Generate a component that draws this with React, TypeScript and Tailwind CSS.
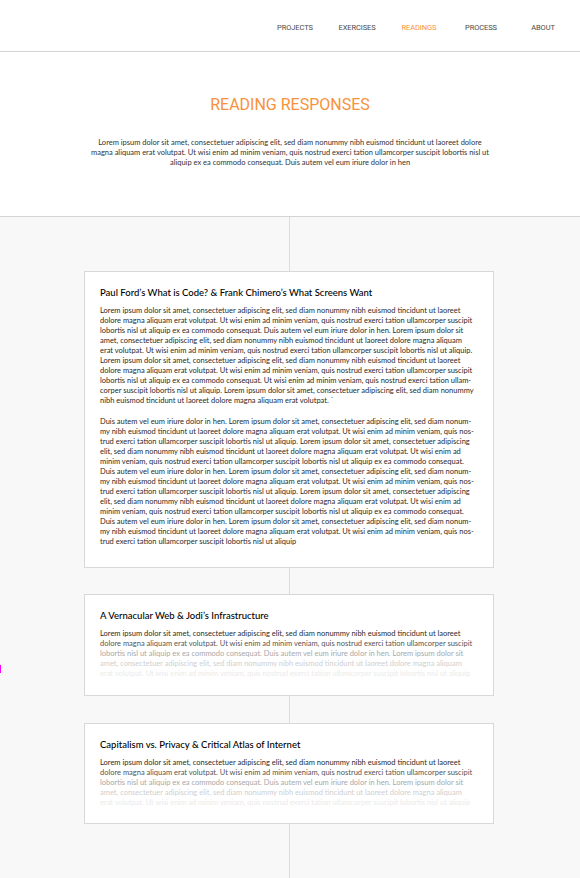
import React from "react";

const para1 = [
  "Lorem ipsum dolor sit amet, consectetuer adipiscing elit, sed diam nonummy nibh euismod tincidunt ut laoreet",
  "dolore magna aliquam erat volutpat. Ut wisi enim ad minim veniam, quis nostrud exerci tation ullamcorper suscipit",
  "lobortis nisl ut aliquip ex ea commodo consequat. Duis autem vel eum iriure dolor in hen. Lorem ipsum dolor sit",
  "amet, consectetuer adipiscing elit, sed diam nonummy nibh euismod tincidunt ut laoreet dolore magna aliquam",
  "erat volutpat. Ut wisi enim ad minim veniam, quis nostrud exerci tation ullamcorper suscipit lobortis nisl ut aliquip.",
  "Lorem ipsum dolor sit amet, consectetuer adipiscing elit, sed diam nonummy nibh euismod tincidunt ut laoreet",
  "dolore magna aliquam erat volutpat. Ut wisi enim ad minim veniam, quis nostrud exerci tation ullamcorper suscipit",
  "lobortis nisl ut aliquip ex ea commodo consequat. Ut wisi enim ad minim veniam, quis nostrud exerci tation ullam-",
  "corper suscipit lobortis nisl ut aliquip. Lorem ipsum dolor sit amet, consectetuer adipiscing elit, sed diam nonummy",
  "nibh euismod tincidunt ut laoreet dolore magna aliquam erat volutpat. `",
];

const p2a = [
  "Duis autem vel eum iriure dolor in hen. Lorem ipsum dolor sit amet, consectetuer adipiscing elit, sed diam nonum-",
  "my nibh euismod tincidunt ut laoreet dolore magna aliquam erat volutpat. Ut wisi enim ad minim veniam, quis nos-",
  "trud exerci tation ullamcorper suscipit lobortis nisl ut aliquip. Lorem ipsum dolor sit amet, consectetuer adipiscing",
  "elit, sed diam nonummy nibh euismod tincidunt ut laoreet dolore magna aliquam erat volutpat. Ut wisi enim ad",
  "minim veniam, quis nostrud exerci tation ullamcorper suscipit lobortis nisl ut aliquip ex ea commodo consequat.",
];
const para2 = [...p2a, ...p2a, p2a[0], p2a[1], "trud exerci tation ullamcorper suscipit lobortis nisl ut aliquip"];

const preview = [
  "Lorem ipsum dolor sit amet, consectetuer adipiscing elit, sed diam nonummy nibh euismod tincidunt ut laoreet",
  "dolore magna aliquam erat volutpat. Ut wisi enim ad minim veniam, quis nostrud exerci tation ullamcorper suscipit",
  "lobortis nisl ut aliquip ex ea commodo consequat. Duis autem vel eum iriure dolor in hen. Lorem ipsum dolor sit",
  "amet, consectetuer adipiscing elit, sed diam nonummy nibh euismod tincidunt ut laoreet dolore magna aliquam",
  "erat volutpat. Ut wisi enim ad minim veniam, quis nostrud exerci tation ullamcorper suscipit lobortis nisl ut aliquip",
];
const fade = ["text-[#2a2a2a]", "text-[#555555]", "text-[#a8a8a8]", "text-[#cfcfcf]", "text-[#ebebeb]"];

const bodyFont = { fontFamily: "Lato, 'Noto Sans', sans-serif" };

function Lines({ lines, classes }: { lines: string[]; classes?: string[] }) {
  return (
    <div className="text-[7.5px] leading-[10px]" style={bodyFont}>
      {lines.map((l, i) => (
        <div key={i} className={`whitespace-nowrap ${classes ? classes[i] : "text-[#2a2a2a]"}`}>
          {l}
        </div>
      ))}
    </div>
  );
}

function Card({ title, children, pb }: { title: string; children: React.ReactNode; pb: string }) {
  return (
    <div className={`w-[410px] bg-white border border-[#d8d8d8] px-[15px] pt-[15px] ${pb}`}>
      <div className="text-[9.5px] leading-[12px] text-black font-medium" style={bodyFont}>
        {title}
      </div>
      <div className="mt-[7px]">{children}</div>
    </div>
  );
}

const Seg = ({ h }: { h: string }) => <div className={`w-px bg-[#dcdcdc] ${h}`} />;

export default function App() {
  const nav = ["PROJECTS", "EXERCISES", "READINGS", "PROCESS", "ABOUT"];
  return (
    <div className="w-[580px] h-[878px] overflow-hidden bg-[#f8f8f8] relative">
      <header className="h-[52px] bg-white border-b border-[#d4d4d4] flex items-center justify-end pr-[6px] pt-[4px]">
        {nav.map((n) => (
          <div
            key={n}
            className={`w-[62px] text-center text-[7.5px] tracking-[-0.1px] ${n === "READINGS" ? "text-[#f7923a]" : "text-[#4a4a4a]"}`}
            style={{ fontFamily: "Roboto, sans-serif" }}
          >
            {n}
          </div>
        ))}
      </header>
      <section className="h-[165px] bg-white border-b border-[#d4d4d4] flex flex-col items-center pt-[44px]">
        <h1 className="text-[16px] leading-[18px] text-[#f7923a] font-normal" style={{ fontFamily: "Roboto, sans-serif" }}>
          READING RESPONSES
        </h1>
        <div className="mt-[24px] text-[7.5px] leading-[10px] text-[#333] text-center" style={bodyFont}>
          <div>Lorem ipsum dolor sit amet, consectetuer adipiscing elit, sed diam nonummy nibh euismod tincidunt ut laoreet dolore</div>
          <div>magna aliquam erat volutpat. Ut wisi enim ad minim veniam, quis nostrud exerci tation ullamcorper suscipit lobortis nisl ut</div>
          <div>aliquip ex ea commodo consequat. Duis autem vel eum iriure dolor in hen</div>
        </div>
      </section>
      <main className="flex flex-col items-center pr-[2px]">
        <Seg h="h-[54px]" />
        <Card title="Paul Ford’s What is Code? & Frank Chimero’s What Screens Want" pb="pb-[20px]">
          <Lines lines={para1} />
          <div className="h-[11px]" />
          <Lines lines={para2} />
        </Card>
        <Seg h="h-[26px]" />
        <Card title="A Vernacular Web & Jodi’s Infrastructure" pb="pb-[16px]">
          <Lines lines={preview} classes={fade} />
        </Card>
        <Seg h="h-[27px]" />
        <Card title="Capitalism vs. Privacy & Critical Atlas of Internet" pb="pb-[15px]">
          <Lines lines={preview} classes={fade} />
        </Card>
        <Seg h="h-[80px]" />
      </main>
      <div className="absolute left-0 top-[665px] w-px h-[8px] bg-[#ff00ff]" />
    </div>
  );
}
